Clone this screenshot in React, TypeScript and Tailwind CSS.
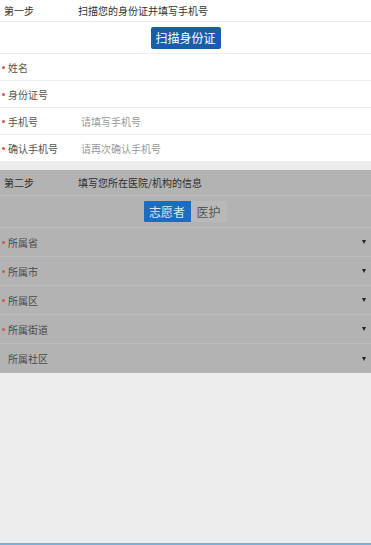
// Registration form: step 1 (ID scan + phone) and step 2 (institution info)
import React from 'react'

const font = { fontFamily: '"Noto Sans CJK SC", "Noto Sans", sans-serif' }

const Dot: React.FC<{ show?: boolean }> = ({ show = true }) => (
  <span className="w-[8px] flex items-center">
    {show && <span className="ml-[2px] w-[3px] h-[3px] rounded-full bg-[#d9534f]" />}
  </span>
)

const Arrow = () => (
  <span className="mr-[5px] w-0 h-0 border-l-[2.5px] border-r-[2.5px] border-t-[4px] border-l-transparent border-r-transparent border-t-[#222]" />
)

const Field: React.FC<{ label: string; placeholder?: string; last?: boolean }> = ({ label, placeholder, last }) => (
  <div className={`flex items-center text-[10px] ${last ? 'h-[26px]' : 'h-[27px] border-b border-[#ececec]'}`}>
    <Dot />
    <span className="w-[73px] text-[#555]">{label}</span>
    {placeholder && <span className="text-[#9a9a9a]">{placeholder}</span>}
  </div>
)

const SelectRow: React.FC<{ label: string; required?: boolean; last?: boolean }> = ({
  label,
  required = true,
  last,
}) => (
  <div className={`flex items-center h-[29px] text-[10px] ${last ? '' : 'border-b border-[#bdbdbd]'}`}>
    <Dot show={required} />
    <span className="flex-1 text-[#4a4a4a]">{label}</span>
    <Arrow />
  </div>
)

const App: React.FC = () => {
  return (
    <div className="w-[371px] h-[545px] flex flex-col bg-[#ededed] overflow-hidden" style={font}>
      {/* Step 1 */}
      <div className="bg-white">
        <div className="flex items-center h-[22px] border-b border-[#ececec] text-[10px] text-[#333]">
          <span className="w-[78px] pl-[4px]">第一步</span>
          <span>扫描您的身份证并填写手机号</span>
        </div>
        <div className="flex items-center justify-center h-[32px] border-b border-[#ececec]">
          <button className="h-[22px] w-[70px] rounded-[2px] bg-[#1a5ea8] text-white text-[12px]">
            扫描身份证
          </button>
        </div>
        <Field label="姓名" />
        <Field label="身份证号" />
        <Field label="手机号" placeholder="请填写手机号" />
        <Field label="确认手机号" placeholder="请再次确认手机号" last />
      </div>

      <div className="h-[9px]" />

      {/* Step 2 */}
      <div className="bg-[#b3b3b3]">
        <div className="flex items-center h-[26px] border-b border-[#bdbdbd] text-[10px] text-[#2e2e2e]">
          <span className="w-[78px] pl-[4px]">第二步</span>
          <span>填写您所在医院/机构的信息</span>
        </div>
        <div className="flex items-center justify-center h-[32px] border-b border-[#bdbdbd] text-[12px]">
          <div className="flex h-[21px] ml-[-1px]">
            <span className="w-[47px] flex items-center justify-center bg-[#1c6cc0] text-[#dbe6f2] rounded-l-[1px]">
              志愿者
            </span>
            <span className="w-[36px] flex items-center justify-center bg-[#b9b9b9] text-[#555]">
              医护
            </span>
          </div>
        </div>
        <SelectRow label="所属省" />
        <SelectRow label="所属市" />
        <SelectRow label="所属区" />
        <SelectRow label="所属街道" />
        <SelectRow label="所属社区" required={false} last />
      </div>

      <div className="flex-1" />
      <div className="h-[2px] bg-[#7ab0dc]" />
    </div>
  )
}

export default App
